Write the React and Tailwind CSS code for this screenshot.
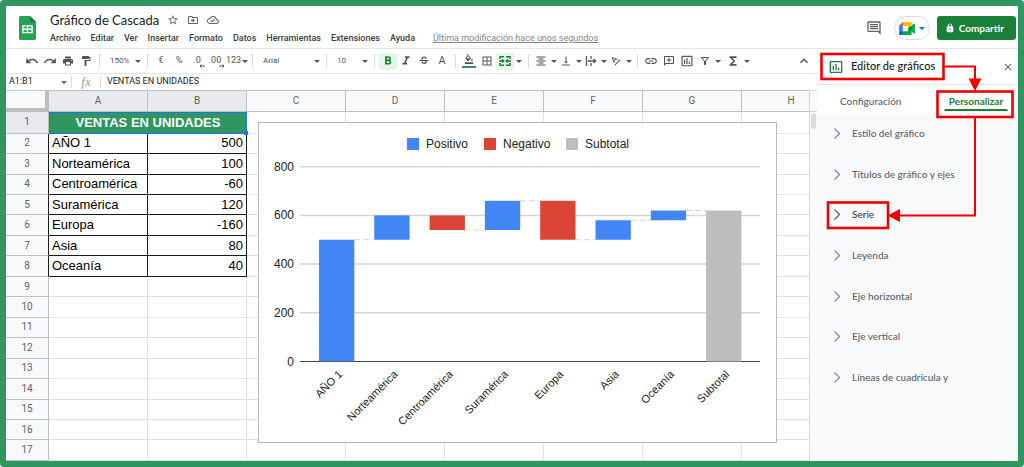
import clsx from "clsx";
import {
  MdBorderAll,
  MdClose,
  MdFormatAlignCenter,
  MdFormatBold,
  MdFormatColorFill,
  MdFormatItalic,
  MdFormatPaint,
  MdFunctions,
  MdInsertChartOutlined,
  MdKeyboardArrowUp,
  MdLink,
  MdLock,
  MdOutlineAddComment,
  MdOutlineCloudDone,
  MdOutlineComment,
  MdOutlineDriveFileMove,
  MdOutlineFilterAlt,
  MdPrint,
  MdRedo,
  MdStarBorder,
  MdStrikethroughS,
  MdTextRotationAngleup,
  MdUndo,
  MdVerticalAlignBottom,
} from "react-icons/md";

const menus = [
  "Archivo",
  "Editar",
  "Ver",
  "Insertar",
  "Formato",
  "Datos",
  "Herramientas",
  "Extensiones",
  "Ayuda",
];

const columns = ["A", "B", "C", "D", "E", "F", "G", "H"];

const sales = [
  ["AÑO 1", 500],
  ["Norteamérica", 100],
  ["Centroamérica", -60],
  ["Suramérica", 120],
  ["Europa", -160],
  ["Asia", 80],
  ["Oceanía", 40],
];

const sections = [
  "Estilo del gráfico",
  "Títulos de gráfico y ejes",
  "Serie",
  "Leyenda",
  "Eje horizontal",
  "Eje vertical",
  "Líneas de cuadrícula y",
];

function Caret({ className }) {
  return (
    <svg viewBox="0 0 6 3" className={clsx("h-[3px] w-[6px] shrink-0", className)} aria-hidden="true">
      <path d="M0 0h6L3 3z" fill="currentColor" />
    </svg>
  );
}

function SheetsLogo() {
  return (
    <svg viewBox="0 0 17 24" className="h-6 w-[17px] shrink-0" role="img" aria-label="Hojas de cálculo">
      <path d="M1.6 0H11l6 6v16.4a1.6 1.6 0 0 1-1.6 1.6H1.6A1.6 1.6 0 0 1 0 22.4V1.6A1.6 1.6 0 0 1 1.6 0z" fill="#23a455" />
      <path d="M11 0l6 6h-4.4A1.6 1.6 0 0 1 11 4.4z" fill="#168043" />
      <path d="M3.2 9.2h10.6v8H3.2zm1.4 1.4v2h3.2v-2zm4.6 0v2h3.2v-2zm-4.6 3.3v2h3.2v-2zm4.6 0v2h3.2v-2z" fill="#fff" fillRule="evenodd" />
    </svg>
  );
}

function MeetLogo() {
  return (
    <svg viewBox="0 0 87.5 72" className="h-[13px] w-[16px]" aria-hidden="true">
      <path d="M49.5 36l8.53 9.75 11.47 7.33 2-17.02-2-16.64-11.69 6.44z" fill="#00832d" />
      <path d="M0 51.5V66c0 3.32 2.69 6 6 6h14.5l3-10.96-3-9.54-9.95-3z" fill="#0066da" />
      <path d="M20.5 0L0 20.5l10.55 3 9.95-3 2.95-9.41z" fill="#e94235" />
      <path d="M20.5 20.5H0v31h20.5z" fill="#2684fc" />
      <path d="M82.6 8.68L69.5 19.42v33.66l13.16 10.79c1.97 1.54 4.85.135 4.85-2.37V11c0-2.535-2.945-3.925-4.91-2.32zM49.5 36v15.5h-29V72h43c3.32 0 6-2.68 6-6V53.08z" fill="#00ac47" />
      <path d="M63.5 0h-43v20.5h29V36l20-16.57V6c0-3.32-2.68-6-6-6z" fill="#ffba00" />
    </svg>
  );
}

function MergeIcon() {
  return (
    <svg viewBox="0 0 12 12" className="size-3" fill="none" stroke="currentColor" strokeWidth="1.4" aria-hidden="true">
      <path d="M1 4V1.7h4M7 1.7h4V4M1 8v2.3h4M7 10.3h4V8M0 6h4.5M12 6H7.5M3.2 4.4L4.8 6 3.2 7.6M8.8 4.4L7.2 6l1.6 1.6" />
    </svg>
  );
}

function WrapIcon() {
  return (
    <svg viewBox="0 0 12 12" className="size-3" fill="none" stroke="currentColor" strokeWidth="1.3" aria-hidden="true">
      <path d="M1.5 1v10M6 1v3M6 8v3M3 6h7.5M8.6 4l2 2-2 2" />
    </svg>
  );
}

function Decimals({ text, more }) {
  return (
    <span className="relative">
      {text}
      <svg viewBox="0 0 6 4" className="absolute -right-1 bottom-0 h-1 w-[6px]" fill="none" stroke="currentColor" aria-hidden="true">
        <path d={more ? "M0 2h5M3.5 0.5L5 2 3.5 3.5" : "M6 2H1M2.5 0.5L1 2l1.5 1.5"} />
      </svg>
    </span>
  );
}

function Tool({ label, active, wide, caret, children }) {
  return (
    <button
      type="button"
      aria-label={label}
      className={clsx(
        "flex h-[17px] shrink-0 items-center justify-center rounded-xs",
        wide || "w-[18px]",
        active && "bg-[#e6f4ea] text-[#188038]",
      )}
    >
      {children}
      {caret && <Caret className="ml-1" />}
    </button>
  );
}

function Divider() {
  return <span className="mx-1 h-3.5 w-px shrink-0 bg-[#dadce0]" />;
}

function Picker({ label, value, className }) {
  return (
    <span className={clsx("relative flex shrink-0 items-center", className)}>
      <select aria-label={label} defaultValue={value} className="w-full appearance-none bg-transparent pl-1.5 outline-none">
        <option>{value}</option>
      </select>
      <Caret className="pointer-events-none absolute right-0.5" />
    </span>
  );
}

function Header() {
  return (
    <header className="flex items-center border-b border-[#e3e5e8] pt-1 pr-0.5 pb-0.5 pl-[13px]">
      <SheetsLogo />
      <div className="ml-3.5 flex-1">
        <div className="flex items-center gap-2 text-[#5f6368]">
          <h1 className="font-[Lato,sans-serif] text-[13px] leading-5 text-[#202124]">Gráfico de Cascada</h1>
          <button type="button" aria-label="Destacar"><MdStarBorder className="size-3" /></button>
          <button type="button" aria-label="Mover"><MdOutlineDriveFileMove className="size-3" /></button>
          <button type="button" aria-label="Estado del documento"><MdOutlineCloudDone className="size-3" /></button>
        </div>
        <nav className="flex h-4 items-center gap-2.5 text-[9px] leading-4 font-medium text-[#3c4043]">
          {menus.map((menu) => (
            <button type="button" key={menu}>{menu}</button>
          ))}
          <a href="#historial" className="ml-2 font-normal text-[#80868b] underline">
            Última modificación hace unos segundos
          </a>
        </nav>
      </div>
      <button type="button" aria-label="Comentarios" className="mr-3 text-[#5f6368]">
        <MdOutlineComment className="size-4" />
      </button>
      <button
        type="button"
        aria-label="Meet"
        className="mr-[7px] flex h-6 w-9 items-center justify-center gap-1 rounded-full border border-[#dadce0] text-[#1967d2]"
      >
        <MeetLogo />
        <Caret />
      </button>
      <button type="button" className="flex h-6 items-center gap-1 rounded-[3px] bg-[#188038] pr-3 pl-2 font-[Lato,sans-serif] text-[10px] font-bold text-white">
        <MdLock className="size-2.5" />
        Compartir
      </button>
    </header>
  );
}

function Toolbar() {
  return (
    <div role="toolbar" aria-label="Herramientas" className="flex h-[25px] items-center border-b border-[#e3e5e8] pr-1 pl-[17px] text-[9px] text-[#50555a]">
      <Tool label="Deshacer"><MdUndo className="size-3.5" /></Tool>
      <Tool label="Rehacer"><MdRedo className="size-3.5" /></Tool>
      <Tool label="Imprimir"><MdPrint className="size-3" /></Tool>
      <Tool label="Copiar formato"><MdFormatPaint className="size-3" /></Tool>
      <Divider />
      <Picker label="Zoom" value="150%" className="w-[39px] text-[8px]" />
      <Divider />
      <Tool label="Moneda">€</Tool>
      <Tool label="Porcentaje">%</Tool>
      <Tool label="Menos decimales"><Decimals text=".0" /></Tool>
      <Tool label="Más decimales"><Decimals text=".00" more /></Tool>
      <button type="button" className="flex w-6 shrink-0 items-center gap-px pl-0.5">
        123
        <Caret />
      </button>
      <Divider />
      <Picker label="Fuente" value="Arial" className="w-[65px] text-[8px]" />
      <Divider />
      <Picker label="Tamaño" value="10" className="w-[39px] text-[8px]" />
      <Divider />
      <Tool label="Negrita" active><MdFormatBold className="size-3.5" /></Tool>
      <Tool label="Cursiva"><MdFormatItalic className="size-3.5" /></Tool>
      <Tool label="Tachado"><MdStrikethroughS className="size-3" /></Tool>
      <Tool label="Color de texto"><span className="text-[11px]">A</span></Tool>
      <Divider />
      <Tool label="Color de relleno">
        <span className="flex flex-col items-center">
          <MdFormatColorFill className="h-2.5 w-3" />
          <span className="mt-0.5 h-0.5 w-3.5 bg-[#2f9660]" />
        </span>
      </Tool>
      <Tool label="Bordes"><MdBorderAll className="size-3" /></Tool>
      <Tool label="Combinar celdas" active><MergeIcon /></Tool>
      <button type="button" aria-label="Tipo de combinación" className="flex h-4 w-2.5 shrink-0 items-center justify-center">
        <Caret />
      </button>
      <Divider />
      <Tool label="Alineación horizontal" wide="w-[25px]" caret><MdFormatAlignCenter className="size-3" /></Tool>
      <Tool label="Alineación vertical" wide="w-[25px]" caret><MdVerticalAlignBottom className="size-3" /></Tool>
      <Tool label="Ajuste de texto" wide="w-[25px]" caret><WrapIcon /></Tool>
      <Tool label="Rotación de texto" wide="w-[25px]" caret><MdTextRotationAngleup className="size-3" /></Tool>
      <Divider />
      <Tool label="Insertar enlace"><MdLink className="size-3.5" /></Tool>
      <Tool label="Insertar comentario"><MdOutlineAddComment className="size-3 -scale-x-100" /></Tool>
      <Tool label="Insertar gráfico"><MdInsertChartOutlined className="size-3.5" /></Tool>
      <Tool label="Filtro" wide="w-[28px]" caret><MdOutlineFilterAlt className="size-3" /></Tool>
      <Tool label="Funciones" wide="w-[28px]" caret><MdFunctions className="size-3.5" /></Tool>
      <span className="flex-1" />
      <Tool label="Ocultar menús"><MdKeyboardArrowUp className="size-4" /></Tool>
    </div>
  );
}

function FormulaBar() {
  return (
    <div className="flex h-4 items-center text-[9px] text-[#202124]">
      <span className="relative flex w-[65px] items-center">
        <input aria-label="Cuadro de nombres" defaultValue="A1:B1" className="w-full pl-[3px] outline-none" />
        <Caret className="absolute right-1 text-[#5f6368]" />
      </span>
      <span className="h-3 w-px bg-[#dadce0]" />
      <span className="w-7 text-center font-['Liberation_Serif',serif] text-[13px] leading-3 text-[#9aa0a6] italic">fx</span>
      <span className="h-3 w-px bg-[#dadce0]" />
      <input aria-label="Fórmula" defaultValue="VENTAS EN UNIDADES" className="flex-1 pl-1.5 outline-none" />
    </div>
  );
}

const filled = "border-r border-b border-[#1a1a1a] px-[3px]";
const empty = "border-r border-b border-[#e1e1e1]";

function Grid() {
  return (
    <table className="h-full w-[835px] table-fixed border-separate border-spacing-0 font-['Liberation_Sans',sans-serif] text-[13px] leading-4 text-black">
      <colgroup>
        <col className="w-[43px]" />
        {columns.map((name) => (
          <col key={name} className="w-[99px]" />
        ))}
      </colgroup>
      <thead className="font-[Roboto,sans-serif] text-[10px] text-[#5f6368]">
        <tr className="h-[22px]">
          <td className="border-t border-r-4 border-b-4 border-[#bdbdbd] border-t-[#c6c6c6] bg-[#f8f9fa] p-0" />
          {columns.map((name, i) => (
            <th
              key={name}
              scope="col"
              className={clsx(
                "border-t border-r border-b border-[#c0c0c0] p-0 font-normal",
                i < 2 ? "bg-[#e8eaed]" : "bg-[#f8f9fa]",
              )}
            >
              {name}
            </th>
          ))}
        </tr>
      </thead>
      <tbody>
        {Array.from({ length: 17 }, (_, i) => {
          const entry = sales[i - 1];
          return (
            <tr key={i}>
              <th
                scope="row"
                className={clsx(
                  "border-r border-b p-0 font-[Roboto,sans-serif] text-[10px] font-normal text-[#5f6368]",
                  i === 0 ? "bg-[#e8eaed]" : "bg-[#f8f9fa]",
                  entry ? "border-[#c0c0c0] border-r-[#1a1a1a]" : "border-[#c0c0c0]",
                )}
              >
                {i + 1}
              </th>
              {i === 0 && (
                <td colSpan={2} className="relative border border-[#1a73e8] bg-[#2f9660] p-0 text-center font-bold text-white">
                  VENTAS EN UNIDADES
                  <span className="absolute -right-0.5 -bottom-0.5 z-10 size-1 bg-[#1a73e8]" />
                </td>
              )}
              {entry && (
                <>
                  <td className={clsx(filled, "py-0")}>{entry[0]}</td>
                  <td className={clsx(filled, "py-0 text-right")}>{entry[1]}</td>
                </>
              )}
              {columns.slice(i > 7 ? 0 : 2).map((name) => (
                <td key={name} className={clsx(empty, "p-0")} />
              ))}
            </tr>
          );
        })}
      </tbody>
    </table>
  );
}

const legend = [
  { label: "Positivo", color: "#4285f4", x: 148 },
  { label: "Negativo", color: "#db4437", x: 225 },
  { label: "Subtotal", color: "#bdbdbd", x: 307 },
];

const baseline = 238.5;
const unit = 48.7 / 200;
const toY = (value) => baseline - value * unit;

function buildBars() {
  let total = 0;
  const bars = sales.map(([label, value]) => {
    const start = total;
    total += value;
    return { label, start, end: total, color: value < 0 ? "#db4437" : "#4285f4" };
  });
  return [...bars, { label: "Subtotal", start: 0, end: total, color: "#bdbdbd" }];
}

function WaterfallChart() {
  const bars = buildBars();
  return (
    <svg
      viewBox="0 0 517 319"
      className="w-[517px] font-['Liberation_Sans',sans-serif] text-[12px]"
      role="img"
      aria-label="Gráfico de cascada"
    >
      {legend.map(({ label, color, x }) => (
        <g key={label}>
          <rect x={x} y="15" width="12" height="12" fill={color} />
          <text x={x + 19} y="25" fill="#222">{label}</text>
        </g>
      ))}
      {[800, 600, 400, 200, 0].map((tick) => (
        <g key={tick}>
          <line x1="41" x2="501" y1={toY(tick)} y2={toY(tick)} stroke={tick ? "#d5d5d5" : "#444"} strokeWidth={tick ? 1.5 : 1} />
          <text x="35" y={toY(tick) + 4} textAnchor="end" fill="#222">{tick}</text>
        </g>
      ))}
      {bars.map((bar, i) => {
        const x = 60 + i * 55.3;
        const top = toY(Math.max(bar.start, bar.end));
        return (
          <g key={bar.label}>
            {i < bars.length - 1 && (
              <line x1={x + 35} x2={x + 56} y1={toY(bar.end)} y2={toY(bar.end)} stroke="#d5d5d5" strokeDasharray="6 3" />
            )}
            <rect x={x} y={top} width="35.3" height={Math.abs(bar.end - bar.start) * unit} fill={bar.color} />
            <text textAnchor="end" transform={`translate(${x + 24} 252) rotate(-45)`} fill="#222" className="text-[11px]">{bar.label}</text>
          </g>
        );
      })}
    </svg>
  );
}

function Arrows() {
  return (
    <svg viewBox="0 0 201 184" className="pointer-events-none absolute top-0 left-0 h-[184px] w-[201px]" fill="none" stroke="#f00000" aria-hidden="true">
      <g strokeWidth="2.6">
        <rect x="4.5" y="5" width="122" height="25" />
        <rect x="120.5" y="42.5" width="75" height="25.5" />
        <rect x="11" y="153.5" width="60" height="25.5" />
      </g>
      <g strokeWidth="2">
        <path d="M127 17.5h31V32" />
        <path d="M158 69v97.5H82" />
      </g>
      <path d="M151.5 29.5h13L158 42zM83 160v13l-12.5-6.5z" fill="#f00000" stroke="none" />
    </svg>
  );
}

function ChartEditor() {
  return (
    <aside className="relative flex w-[201px] shrink-0 flex-col bg-[#f8f9fa] font-[Lato,sans-serif]">
      <div className="flex h-9 items-center border-b border-[#e3e5e8] bg-white pr-1 pl-[11px]">
        <MdInsertChartOutlined className="size-4 text-[#188038]" />
        <h2 className="flex-1 pl-[7px] text-[11px] font-medium text-[#202124]">Editor de gráficos</h2>
        <button type="button" aria-label="Cerrar" className="text-[#5f6368]"><MdClose className="size-3" /></button>
      </div>
      <div role="tablist" className="flex h-7 items-stretch justify-between bg-white pl-[23px] text-[10px]">
        <button type="button" role="tab" aria-selected="false" className="pt-1 font-medium text-[#5f6368]">Configuración</button>
        <button type="button" role="tab" aria-selected="true" className="flex w-[84px] flex-col items-center justify-end font-bold text-[#188038]">
          Personalizar
          <span className="mb-0.5 h-0.5 w-16 rounded-t bg-[#188038]" />
        </button>
      </div>
      <ul className="grid h-[285px] auto-rows-fr text-[10px] font-medium text-[#5f6368]">
        {sections.map((section) => (
          <li key={section} className="flex">
            <button type="button" className="flex flex-1 items-center gap-3 pl-[17px] text-left">
              <svg viewBox="0 0 6 11" className="h-[11px] w-[6px]" fill="none" stroke={section === "Serie" ? "#5f6368" : "#8a8f94"} strokeWidth="1.3" aria-hidden="true">
                <path d="M0.5 0.5l5 5-5 5" />
              </svg>
              <span className={section === "Serie" ? "text-[#3c4043]" : undefined}>{section}</span>
            </button>
          </li>
        ))}
      </ul>
      <Arrows />
    </aside>
  );
}

export default function App() {
  return (
    <div className="h-screen rounded bg-[#2f9660] p-[6px] font-[Roboto,sans-serif]">
      <div className="flex h-full flex-col overflow-hidden bg-white">
        <Header />
        <div className="flex min-h-0 flex-1">
          <main className="flex min-w-0 flex-1 flex-col">
            <Toolbar />
            <FormulaBar />
            <div className="flex min-h-0 flex-1">
              <div className="relative min-w-0 flex-1 overflow-hidden border-r border-[#d5d5d5]">
                <Grid />
                <figure className="absolute top-8 left-[252px] border border-[#b7b7b7] bg-white">
                  <WaterfallChart />
                </figure>
              </div>
              <div className="flex w-[7px] flex-col bg-[#fbfbfc]">
                <div className="h-[22px] border-t border-b border-[#d5d5d5] bg-[#f8f9fa]" />
                <div className="mx-px mt-px h-4 rounded-sm bg-[#dadce0]" />
              </div>
            </div>
          </main>
          <ChartEditor />
        </div>
      </div>
    </div>
  );
}
